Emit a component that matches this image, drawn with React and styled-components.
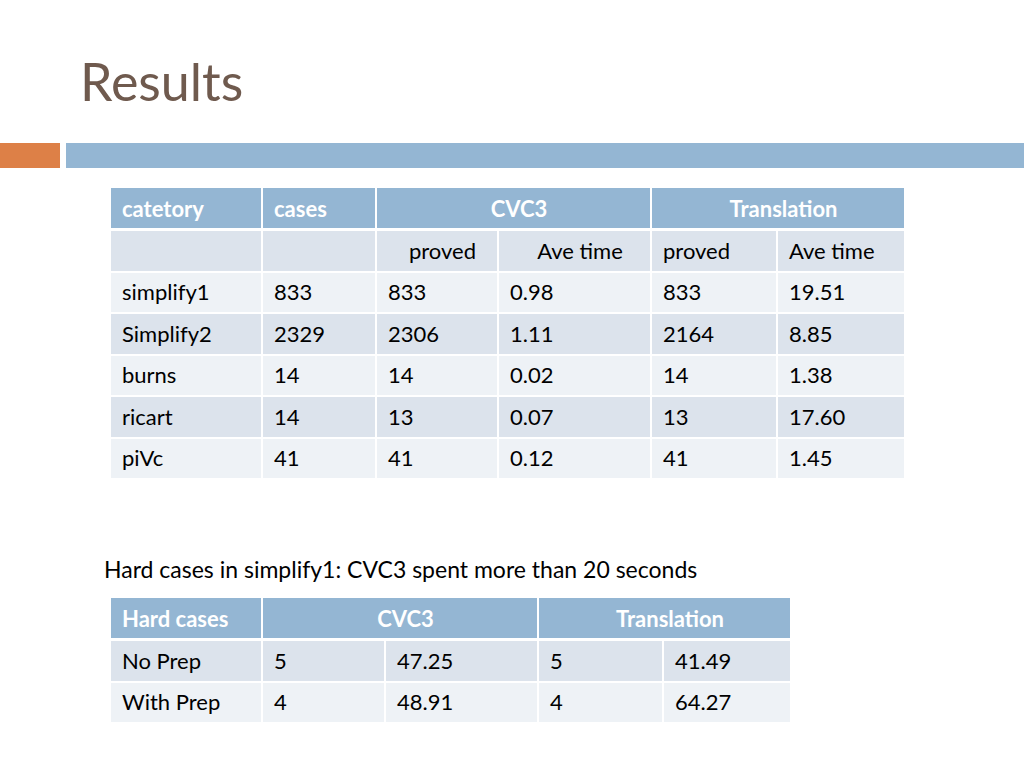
import styled, { createGlobalStyle } from "styled-components";

const GlobalStyle = createGlobalStyle`
  html, body {
    margin: 0;
    padding: 0;
    background: #fff;
  }
  body {
    font-family: Lato, "Open Sans", sans-serif;
  }
`;

const Slide = styled.div`
  width: 1024px;
  height: 768px;
  overflow: hidden;
  background: #fff;
`;
const Title = styled.h1`
  margin: 0;
  padding: 55px 0 0 80px;
  height: 91px;
  box-sizing: border-box;
  font-size: 52px;
  font-weight: 400;
  line-height: 1;
  color: #6f5a4e;
`;
const Bars = styled.div`
  display: flex;
  gap: 6px;
  height: 25px;
  margin-top: 52px;
`;
const Bar = styled.div`
  background: ${(p) => p.color};
  width: ${(p) => (p.width ? p.width + "px" : "auto")};
  flex: ${(p) => (p.width ? "none" : 1)};
`;
const Body = styled.div`
  padding: 20px 0 0 111px;
`;
const Table = styled.table`
  border-collapse: collapse;
  table-layout: fixed;
  font-size: 22px;
  line-height: 26px;
  color: #000;
`;
const Cell = styled.td`
  height: 39.5px;
  padding: 0 0 0 11px;
  border: 2px solid #fff;
  background: ${(p) => (p.dark ? "#dce3ec" : "#eef2f6")};
  text-align: ${(p) => (p.center ? "center" : "left")};
  white-space: nowrap;
  &:first-child {
    border-left: none;
  }
  &:last-child {
    border-right: none;
  }
`;
const Head = styled.th`
  height: 38px;
  padding: 2px 0 0 11px;
  border: 2px solid #fff;
  border-top: none;
  border-bottom-width: 3px;
  background: #94b6d3;
  color: #fff;
  font-weight: 700;
  text-align: ${(p) => (p.center ? "center" : "left")};
  white-space: nowrap;
  &:first-child {
    border-left: none;
  }
  &:last-child {
    border-right: none;
  }
`;
const Caption = styled.p`
  margin: 76px 0 0 -7px;
  font-size: 23px;
  line-height: 26px;
  color: #000;
`;
const SecondTable = styled(Table)`
  margin-top: 16px;
`;

const mainCols = [151, 114, 122, 153, 126, 127];
const hardCols = [151, 123, 153, 125, 127];

const mainRows = [
  ["simplify1", "833", "833", "0.98", "833", "19.51"],
  ["Simplify2", "2329", "2306", "1.11", "2164", "8.85"],
  ["burns", "14", "14", "0.02", "14", "1.38"],
  ["ricart", "14", "13", "0.07", "13", "17.60"],
  ["piVc", "41", "41", "0.12", "41", "1.45"],
];

const hardRows = [
  ["No Prep", "5", "47.25", "5", "41.49"],
  ["With Prep", "4", "48.91", "4", "64.27"],
];

function Cols({ widths }) {
  return (
    <colgroup>
      {widths.map((w, i) => (
        <col key={i} style={{ width: w }} />
      ))}
    </colgroup>
  );
}

export default function App() {
  return (
    <Slide>
      <GlobalStyle />
      <Title>Results</Title>
      <Bars>
        <Bar color="#dd8047" width={60} />
        <Bar color="#94b6d3" />
      </Bars>
      <Body>
        <Table style={{ width: 793 }}>
          <Cols widths={mainCols} />
          <thead>
            <tr>
              <Head>catetory</Head>
              <Head>cases</Head>
              <Head colSpan={2} center>
                CVC3
              </Head>
              <Head colSpan={2} center>
                Translation
              </Head>
            </tr>
          </thead>
          <tbody>
            <tr>
              <Cell dark />
              <Cell dark />
              <Cell dark center>
                proved
              </Cell>
              <Cell dark center>
                Ave time
              </Cell>
              <Cell dark>proved</Cell>
              <Cell dark>Ave time</Cell>
            </tr>
            {mainRows.map((row, i) => (
              <tr key={row[0]}>
                {row.map((v, j) => (
                  <Cell key={j} dark={i % 2 === 1}>
                    {v}
                  </Cell>
                ))}
              </tr>
            ))}
          </tbody>
        </Table>
        <Caption>Hard cases in simplify1: CVC3 spent more than 20 seconds</Caption>
        <SecondTable style={{ width: 679 }}>
          <Cols widths={hardCols} />
          <thead>
            <tr>
              <Head>Hard cases</Head>
              <Head colSpan={2} center>
                CVC3
              </Head>
              <Head colSpan={2} center>
                Translation
              </Head>
            </tr>
          </thead>
          <tbody>
            {hardRows.map((row, i) => (
              <tr key={row[0]}>
                {row.map((v, j) => (
                  <Cell key={j} dark={i % 2 === 0}>
                    {v}
                  </Cell>
                ))}
              </tr>
            ))}
          </tbody>
        </SecondTable>
      </Body>
    </Slide>
  );
}
